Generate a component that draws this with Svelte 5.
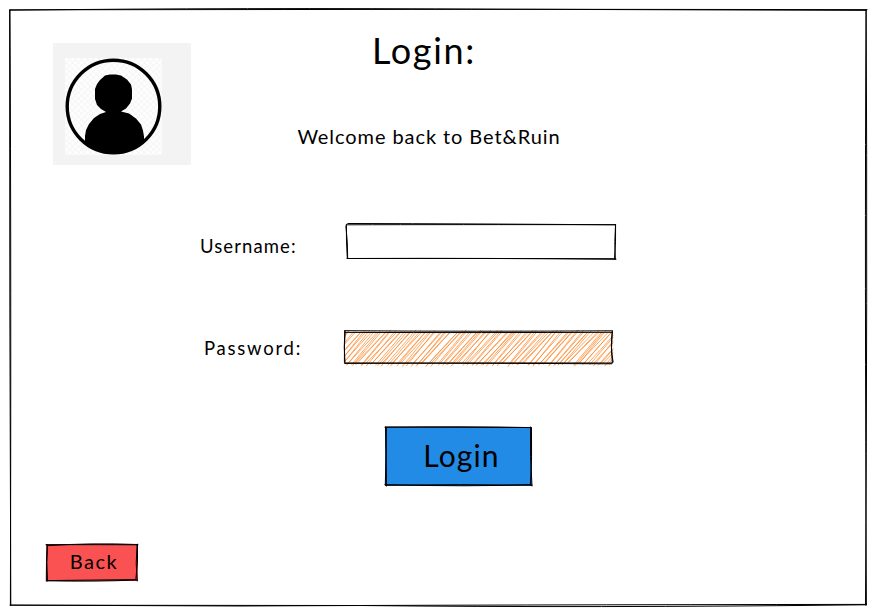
<script>
  // Deterministic jitter keeps the sketched hatching stable between renders.
  const jitter = (n) => {
    const v = Math.sin(n * 127.1 + 11.7) * 43758.5453;
    return v - Math.floor(v) - 0.5;
  };

  const width = 269;
  const height = 33;
  const hatch = [];
  for (let i = 0; i < 60; i++) {
    const foot = -28 + i * 5.05;
    for (let pass = 0; pass < 2; pass++) {
      const seed = i * 2 + pass;
      let x1 = foot + jitter(seed) * 2.6;
      let x2 = foot + 29 + jitter(seed + 300) * 3;
      let y1 = height + 0.5 + jitter(seed + 600) * 4;
      let y2 = 0.5 + jitter(seed + 900) * 3;
      const slope = (y2 - y1) / (x2 - x1);
      if (x1 < 0) {
        y1 += slope * (1 - x1);
        x1 = 1;
      }
      if (x2 > width) {
        y2 += slope * (width - x2);
        x2 = width;
      }
      if (x2 - x1 > 1) {
        const mx = (x1 + x2) / 2 + jitter(seed + 1200) * 0.7;
        const my = (y1 + y2) / 2 + jitter(seed + 1500) * 0.7;
        hatch.push(`M${x1} ${y1}Q${mx} ${my} ${x2} ${y2}`);
      }
    }
  }
</script>

<main>
  <svg class="frame" width="876" height="615" aria-hidden="true">
    <path d="M10 10.2Q240 7.6 500 9.2L866 10.4M10 9.8Q300 9.5 530 9.3L867 9.6" />
    <path d="M866.2 10Q867.5 300 865.5 605M866 10Q864.7 270 866.4 605" />
    <path d="M866.5 604.4Q500 604.8 240 606L10 605.1M866 604.8Q590 608 360 605.5L10.5 605.2" />
    <path d="M9.6 10Q9.5 310 10.8 605M10 10Q11.3 280 10.4 605" />
  </svg>

  <header>
    <div class="avatar">
      <svg width="97" height="97" viewBox="0 0 97 97" role="img" aria-label="User">
        <defs>
          <pattern id="dither" width="6" height="6" patternUnits="userSpaceOnUse">
            <rect width="6" height="6" fill="#f8f8f8" />
            <circle cx="1.5" cy="1.5" r="1.5" fill="#fff" />
            <circle cx="4.5" cy="4.5" r="1.5" fill="#fff" />
          </pattern>
          <clipPath id="disc"><circle cx="48.5" cy="48.5" r="47" /></clipPath>
        </defs>
        <rect width="97" height="97" fill="url(#dither)" />
        <circle cx="48.5" cy="48.5" r="46.3" fill="none" stroke="#000" stroke-width="3.4" />
        <g clip-path="url(#disc)">
          <path d="M40 17.5l5-1h6l5 1 6 4 4 5 1 5v9l-2 5-4 5-5 3 8 2 7 5 5 6 2 6 1 6v18H20V78l1-6 3-6 5-6 6-4 6-2-5-3-4-4-2-6V31l2-5 3-4z" />
        </g>
      </svg>
    </div>
    <div class="intro">
      <h1>Login:</h1>
      <p>Welcome back to Bet&amp;Ruin</p>
    </div>
  </header>

  <form onsubmit={(e) => e.preventDefault()}>
    <div class="row user">
      <label for="username">Username:</label>
      <div class="field">
        <input id="username" type="text" />
        <svg width="271" height="35" aria-hidden="true">
          <path d="M1.8-.5Q130-.2 269.5.8M.8.8Q100 .5 269.5.7M269.5.8Q268.2 17 269.3 35M269.6.5Q270 18 268.5 35M270 35.3Q150 34 1.5 34.5M269.5 34.7Q120 34.4 1 34.5M1.7 34.5Q1.8 18-.1 2M1.3 34.3Q.1 17 .4 .3" />
        </svg>
      </div>
    </div>
    <div class="row pass">
      <label for="password">Password:</label>
      <div class="field">
        <input id="password" type="password" />
        <svg width="269" height="33" aria-hidden="true">
          <path class="hatch" d={hatch.join('')} />
          <path d="M.5-.3Q130 .7 268.5-.2M.5 1.4Q140 1.8 268.5 1.3M268.4.3Q266 17 269.1 31M268.2 1Q266.8 18 268.3 31.7M268.5 32Q130 31.8.8 32.4M267.5 32.8Q150 32.2.6 32M1 32Q-.4 16 .8 0M.4 31Q.2 15 1.1.5" />
        </svg>
      </div>
    </div>
    <button class="login" type="submit">
      <span>Login</span>
      <svg width="147" height="59" aria-hidden="true">
        <path d="M0 .3Q75-.8 146 .6M.5 0Q80 .3 145.5 .5M145.5 0Q144.8 30 147 59M146.5.7Q147.2 30 145.4 58M147 58.2Q75 57 .5 58.2M146 57.5Q85 60 0 57.6M.3 58Q1.7 29 .5 0M1.5 59Q1 30 1.4 1" />
      </svg>
    </button>
  </form>

  <button class="back" type="button">
    <span>Back</span>
    <svg width="92" height="37" aria-hidden="true">
      <path d="M1 1.7Q45-1.3 91 .5M0 .7Q50 .6 92 .8M91.5.2Q92.3 18 89.8 36M91 1Q89.3 20 91.2 37M91 36Q50 37.8.5 36.8M90 35.6Q48 36 .8 36.6M.3 37Q.2 18 1.2.5M1.5 37Q.2 18 1.5 1" />
    </svg>
  </button>
</main>

<style>
  :global(body) {
    margin: 0;
    background: #fff;
  }
  main {
    position: relative;
    box-sizing: border-box;
    width: 876px;
    height: 615px;
    padding: 43px 46px 34px;
    display: flex;
    flex-direction: column;
    align-items: flex-start;
    overflow: hidden;
    background: #fff;
    color: #000;
    font-family: Virgil, 'Segoe Print', Lato, sans-serif;
  }
  svg {
    overflow: visible;
  }
  path {
    stroke-linecap: round;
  }
  .frame,
  .field svg,
  button svg {
    position: absolute;
    top: 0;
    left: 0;
    pointer-events: none;
    fill: none;
    stroke: #000;
    stroke-width: 1;
  }
  header {
    display: flex;
    height: 122px;
    padding-left: 7px;
  }
  .avatar {
    box-sizing: border-box;
    width: 138px;
    height: 122px;
    padding: 15px 0 0 12px;
    background: #f3f3f3;
  }
  .intro {
    width: 476px;
    display: flex;
    flex-direction: column;
    align-items: center;
    margin-top: -14px;
  }
  h1,
  p {
    margin: 0;
    font-weight: 400;
    white-space: nowrap;
  }
  h1 {
    font-size: 36px;
    line-height: 44px;
    letter-spacing: 1.7px;
    margin-right: 10px;
    margin-top: -1px;
  }
  p {
    margin-top: 51px;
    font-size: 20px;
    line-height: 26px;
    letter-spacing: 0.92px;
  }
  form {
    display: flex;
    flex-direction: column;
    padding-top: 59px;
  }
  .row {
    display: flex;
    align-items: center;
  }
  .user {
    height: 35px;
    padding-left: 154px;
  }
  .pass {
    height: 33px;
    margin-top: 72px;
    padding-left: 158px;
  }
  label {
    font-size: 18.5px;
    line-height: 24px;
    letter-spacing: 1.1px;
    white-space: nowrap;
  }
  .user label {
    width: 146px;
    padding-top: 8px;
  }
  .pass label {
    width: 140px;
    padding-top: 1px;
    letter-spacing: 1.75px;
  }
  .field {
    position: relative;
    width: 270px;
    height: 100%;
  }
  input {
    box-sizing: border-box;
    width: 100%;
    height: 100%;
    padding: 0 10px;
    border: 0;
    outline: 0;
    background: transparent;
    font: inherit;
  }
  .field .hatch {
    stroke: #fd8a2e;
    stroke-width: 0.75;
  }
  button {
    position: relative;
    padding: 0;
    border: 0;
    color: #000;
    font-family: inherit;
  }
  .login {
    width: 147px;
    height: 59px;
    margin: 63px 0 0 339px;
    background: #228be6;
    font-size: 30px;
    letter-spacing: 1.1px;
  }
  .login span {
    position: relative;
    left: 3px;
    top: -2px;
  }
  .back {
    width: 92px;
    height: 37px;
    margin-top: auto;
    background: #fa5252;
    font-size: 20px;
    letter-spacing: 1.5px;
  }
  .back span {
    position: relative;
    left: 2px;
    top: -2px;
  }
</style>
